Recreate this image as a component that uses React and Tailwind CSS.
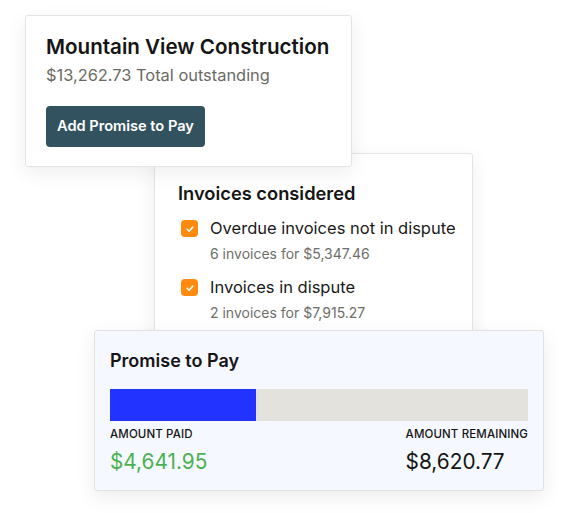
import React from 'react';

function Check() {
  return (
    <span className="flex h-[17px] w-[17px] shrink-0 items-center justify-center rounded-[4px] bg-[#ff8a0d]">
      <svg viewBox="0 0 16 16" className="h-[10px] w-[10px]" fill="none" stroke="white" strokeWidth="2.4" strokeLinecap="round" strokeLinejoin="round">
        <path d="M3.5 8.5l3 3 6-6.5" />
      </svg>
    </span>
  );
}

const invoices = [
  { label: 'Overdue invoices not in dispute', sub: '6 invoices for $5,347.46' },
  { label: 'Invoices in dispute', sub: '2 invoices for $7,915.27' },
];

export default function App() {
  return (
    <div className="h-[513px] w-[570px] overflow-hidden bg-white font-['Inter',sans-serif]">
      <div className="flex flex-col items-start pt-[15px]">
        <div className="relative z-30 ml-[25px] w-[327px] rounded-[3px] border border-[#e4e4e4] bg-white px-5 pt-[18px] pb-[19px] shadow-[0_6px_20px_rgba(0,0,0,0.07)]">
          <h1 className="whitespace-nowrap text-[20.6px] leading-[26px] font-semibold text-[#151515]">Mountain View Construction</h1>
          <p className="mt-[4px] whitespace-nowrap text-[16.4px] leading-[22px] text-[#6a6a64]">$13,262.73 Total outstanding</p>
          <button className="mt-[20px] rounded-[4px] bg-[#33525f] px-[11px] py-[10px] text-[14.6px] leading-[21px] font-semibold text-white">
            Add Promise to Pay
          </button>
        </div>

        <div className="relative z-20 ml-[154px] -mt-[14px] w-[319px] rounded-[3px] border border-[#e4e4e4] bg-white pl-[23px] pt-[27px] pb-[17px] shadow-[0_6px_20px_rgba(0,0,0,0.07)]">
          <h2 className="text-[18.3px] leading-[24px] font-semibold text-[#151515]">Invoices considered</h2>
          <div className="mt-[9px] flex flex-col gap-[8px]">
            {invoices.map((inv) => (
              <div key={inv.label} className="flex gap-[12px] pl-[3px]">
                <div className="pt-[6px]">
                  <Check />
                </div>
                <div>
                  <div className="whitespace-nowrap text-[16.5px] leading-[28px] text-[#1a1a1a]">{inv.label}</div>
                  <div className="mt-[1px] text-[14px] leading-[22px] text-[#6e6e68]">{inv.sub}</div>
                </div>
              </div>
            ))}
          </div>
        </div>

        <div className="relative z-30 ml-[94px] -mt-[12px] w-[450px] rounded-[3px] border border-[#e2e2e2] bg-[#f5f8ff] px-[15px] pt-[18px] pb-[14px] shadow-[0_6px_20px_rgba(0,0,0,0.08)]">
          <h2 className="text-[18px] leading-[24px] font-semibold text-[#151515]">Promise to Pay</h2>
          <div className="mt-[16px] flex h-[32px] w-full bg-[#e3e2dd]">
            <div className="h-full bg-[#2232ff]" style={{ width: `${(4641.95 / 13262.73) * 100}%` }} />
          </div>
          <div className="mt-[5px] flex justify-between">
            <div>
              <div className="text-[11.5px] leading-[16px] font-medium tracking-[0.01em] text-[#151515]">AMOUNT PAID</div>
              <div className="mt-[6px] text-[20.8px] leading-[28px] text-[#4cb050]">$4,641.95</div>
            </div>
            <div>
              <div className="text-[11.5px] leading-[16px] font-medium tracking-[0.01em] text-[#151515]">AMOUNT REMAINING</div>
              <div className="mt-[6px] text-[20.8px] leading-[28px] text-[#151515]">$8,620.77</div>
            </div>
          </div>
        </div>
      </div>
    </div>
  );
}
